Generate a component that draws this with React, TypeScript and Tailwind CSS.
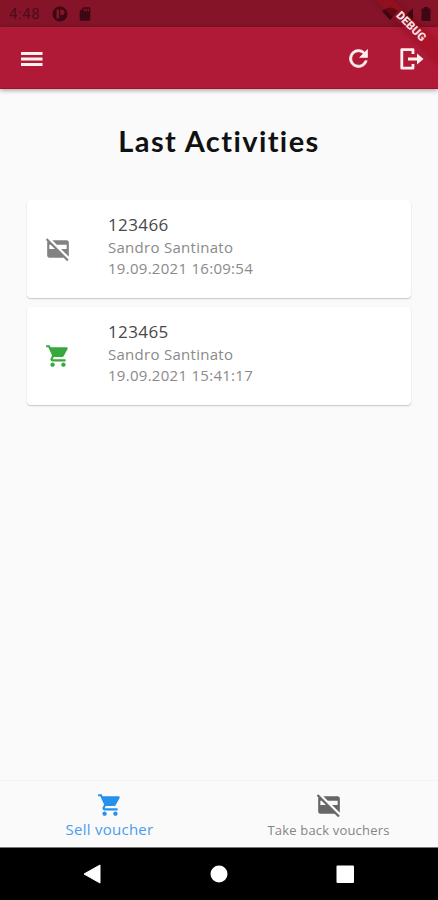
import { MdCreditCardOff, MdSdCard, MdShoppingCart } from "react-icons/md";

interface Activity {
  id: string;
  name: string;
  date: string;
  sold: boolean;
}

const activities: Activity[] = [
  { id: "123466", name: "Sandro Santinato", date: "19.09.2021 16:09:54", sold: false },
  { id: "123465", name: "Sandro Santinato", date: "19.09.2021 15:41:17", sold: true },
];

function StatusBar() {
  return (
    <div className="h-[27px] pt-[1px] pl-[9px] pr-[7px] flex items-center justify-between bg-[#851429] text-[#3d0713]">
      <div className="flex items-center">
        <span className="w-[43px] font-['Roboto',sans-serif] text-[15px] tracking-[0.6px] text-[#4f0b1a]">4:48</span>
        <svg className="w-[16px] h-[16px]" viewBox="0 0 16 16">
          <circle cx="8" cy="8" r="7.5" fill="currentColor" />
          <path d="M4.5 3.5H7V12.5H4.5ZM8.2 3.5H9.8A2.6 2.6 0 0 1 9.8 8.9H8.2Z" fill="#851429" />
        </svg>
        <MdSdCard className="ml-[9px] w-[16px] h-[16px]" />
      </div>
      <div className="flex items-center">
        <svg className="w-[16px] h-[14px]" viewBox="0 0 16 14">
          <path d="M0 4Q8-3 16 4L8 13Z" fill="currentColor" />
        </svg>
        <svg className="ml-[2px] w-[14px] h-[14px]" viewBox="0 0 14 14">
          <path d="M13 1V13H1Z" fill="currentColor" />
        </svg>
        <svg className="ml-[7px] w-[10px] h-[14px]" viewBox="0 0 10 14">
          <path d="M3 0H7V1.5H9.5V14H.5V1.5H3Z" fill="currentColor" />
        </svg>
      </div>
    </div>
  );
}

function DebugBanner() {
  return (
    <div className="absolute top-0 right-0 w-[74px] h-[74px] overflow-hidden">
      <div className="absolute top-[20px] left-[-3px] w-[100px] h-[13px] rotate-45 bg-[#a00a14]/40 shadow-[0_0_6px_rgba(60,0,0,0.25)] text-center font-['Roboto',sans-serif] font-black text-[11.5px] leading-[13px] text-[#f5dfe2]">
        DEBUG
      </div>
    </div>
  );
}

function AppBar() {
  return (
    <div className="h-[62px] pt-[2px] pl-[21px] pr-[14px] flex items-center justify-between bg-[#b11a37] border-b border-[#a80c2a] shadow-[0_1px_5px_rgba(0,0,0,0.4)] text-[#fff0f0]">
      <svg className="w-[22px] h-[16px]" viewBox="0 0 22 16">
        <path d="M0 2.5H21.5M0 8H21.5M0 13.5H21.5" stroke="currentColor" strokeWidth="3" />
      </svg>
      <div className="flex items-center">
        <svg className="w-[27px] h-[27px]" viewBox="0 0 24 24" fill="currentColor" stroke="currentColor" strokeWidth="0.6">
          <path d="M17.65 6.35A7.96 7.96 0 0 0 12 4a8 8 0 1 0 7.73 10h-2.08A6 6 0 1 1 12 6c1.66 0 3.14.69 4.22 1.78L13 11h7V4z" />
        </svg>
        <svg className="ml-[27px] w-[25px] h-[24px]" viewBox="0 0 25 24" fill="none" stroke="currentColor" strokeWidth="2.8">
          <path d="M14 7V2.6H2.8V21.2H14V17M9 12H20" strokeLinejoin="round" />
          <path d="M18 6.5L24.5 12L18 17.5Z" fill="currentColor" stroke="none" />
        </svg>
      </div>
    </div>
  );
}

function ActivityCard(props: { activity: Activity }) {
  const { activity } = props;
  return (
    <div className="h-[98px] pl-[18px] flex items-center rounded-[4px] bg-white shadow-[0_1px_1.5px_rgba(0,0,0,0.22)]">
      {activity.sold ? (
        <MdShoppingCart className="w-[26px] h-[26px] text-[#37a93c]" />
      ) : (
        <MdCreditCardOff className="w-[26px] h-[26px] text-[#828282]" />
      )}
      <div className="ml-[37px] mt-[-8px] text-[15px] leading-[21px] tracking-[0.28px] text-[#8a8a8a]">
        <div className="text-[17px] leading-[25px] tracking-[0.4px] text-[#484848]">{activity.id}</div>
        <div>{activity.name}</div>
        <div>{activity.date}</div>
      </div>
    </div>
  );
}

function App() {
  return (
    <div className="relative w-[438px] h-[900px] overflow-hidden flex flex-col bg-[#fafafa] font-['Open_Sans',sans-serif]">
      <StatusBar />
      <AppBar />
      <div className="flex-1 px-[27px]">
        <h1 className="mt-[32px] h-[40px] text-center font-['Lato',sans-serif] font-bold text-[29px] leading-[40px] tracking-[1.4px] text-[#111]">
          Last Activities
        </h1>
        <div className="mt-[39px] flex flex-col gap-[9px]">
          {activities.map((activity) => (
            <ActivityCard key={activity.id} activity={activity} />
          ))}
        </div>
      </div>
      <div className="h-[67px] flex border-t border-[#f4f4f4] text-center">
        <div className="flex-1 pt-[11px] flex flex-col items-center text-[#2690ed]">
          <MdShoppingCart className="w-[26px] h-[26px]" />
          <span className="text-[15px] leading-[22px] tracking-[0.25px] text-[#4a9cee]">Sell voucher</span>
        </div>
        <div className="flex-1 pt-[11px] flex flex-col items-center text-[#858585]">
          <MdCreditCardOff className="w-[26px] h-[26px] text-[#666]" />
          <span className="text-[13px] leading-[24px] tracking-[0.18px]">Take back vouchers</span>
        </div>
      </div>
      <div className="h-[53px] bg-black border-t border-[#777]">
        <svg className="w-[438px] h-[52px]" viewBox="0 0 438 52" fill="white">
          <path d="M84 26L100 17V35Z" stroke="white" strokeLinejoin="round" />
          <circle cx="219" cy="26" r="8.5" />
          <rect x="336.5" y="17.5" width="17.5" height="17.5" rx="1" />
        </svg>
      </div>
      <DebugBanner />
    </div>
  );
}

export default App;
